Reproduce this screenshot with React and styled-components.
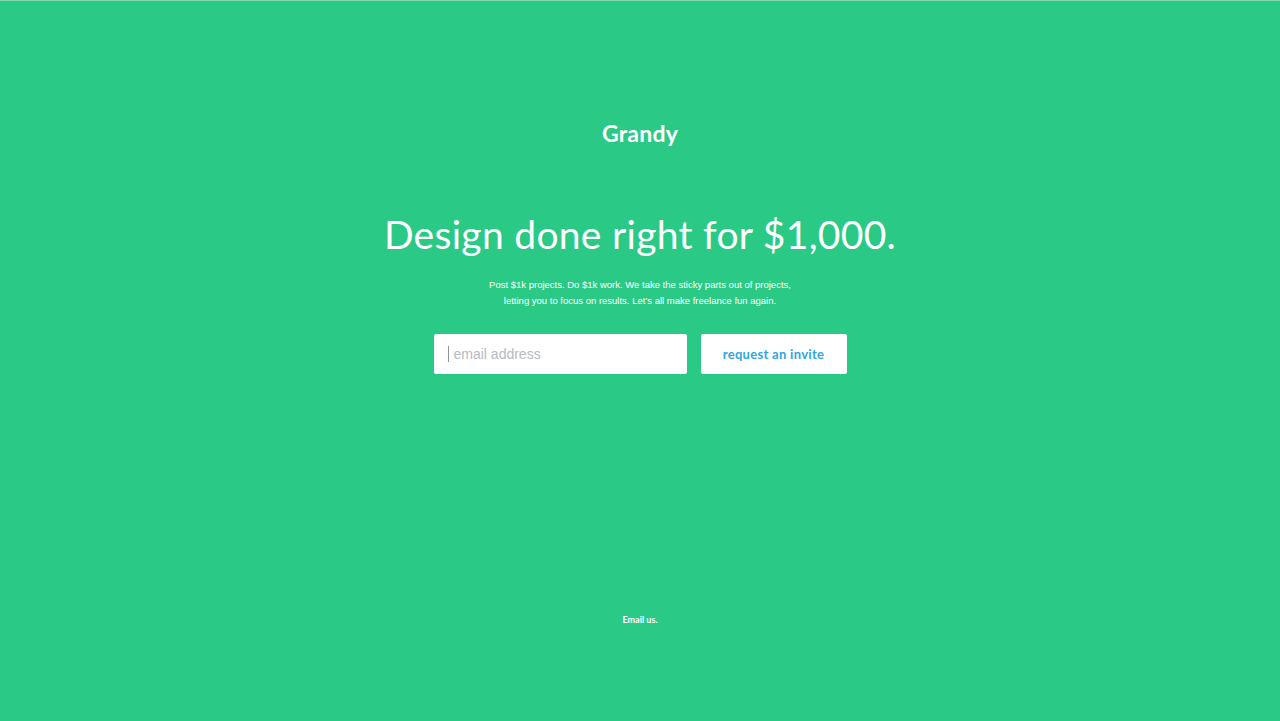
import React from 'react'
import styled, { createGlobalStyle } from 'styled-components'

const GlobalStyle = createGlobalStyle`
  html, body {
    margin: 0;
    padding: 0;
    background: #2bc986;
  }
`;

const Page = styled.div`
  height: 721px;
  background: #2bc986;
  border-top: 1px solid #7fdcb1;
  box-sizing: border-box;
  display: flex;
  flex-direction: column;
  align-items: center;
  color: #fff;
  font-family: "Lato", "Liberation Sans", sans-serif;
`;

const Logo = styled.div`
  margin-top: 116px;
  font-size: 23px;
  font-weight: 700;
  line-height: 32px;
  letter-spacing: 0.2px;
`;

const Headline = styled.h1`
  margin: 57px 0 0;
  font-size: 39px;
  font-weight: 400;
  line-height: 56px;
  letter-spacing: 0.3px;
`;

const Blurb = styled.p`
  margin: 15px 0 0;
  font-family: "Liberation Sans", Arial, sans-serif;
  font-size: 9.5px;
  line-height: 16px;
  text-align: center;
`;

const Form = styled.form`
  display: flex;
  gap: 14px;
  margin-top: 25px;
`;

const InputBox = styled.div`
  position: relative;
  width: 253px;
  height: 40px;
`;

const Caret = styled.span`
  position: absolute;
  left: 14px;
  top: 12px;
  width: 1px;
  height: 16px;
  background: #8c939a;
  pointer-events: none;
`;

const EmailInput = styled.input`
  width: 100%;
  height: 100%;
  box-sizing: border-box;
  border: none;
  border-radius: 2px;
  padding: 0 20px;
  font-family: "Liberation Sans", Arial, sans-serif;
  font-size: 14px;
  color: #555;
  outline: none;
  &::placeholder {
    color: #b5bcc3;
  }
`;

const InviteButton = styled.button`
  width: 146px;
  height: 40px;
  border: none;
  border-radius: 2px;
  background: #fff;
  color: #2fa7e0;
  font-family: "Lato", "Liberation Sans", sans-serif;
  font-size: 13px;
  font-weight: 700;
  letter-spacing: 0.3px;
  cursor: pointer;
`;

const Footer = styled.a`
  margin-top: auto;
  margin-bottom: 96px;
  font-size: 9px;
  font-weight: 700;
  color: #fff;
  text-decoration: none;
`;

export default function App() {
  return (
    <>
      <GlobalStyle />
      <Page>
        <Logo>Grandy</Logo>
        <Headline>Design done right for $1,000.</Headline>
        <Blurb>
          Post $1k projects. Do $1k work. We take the sticky parts out of projects,
          <br />
          letting you to focus on results. Let’s all make freelance fun again.
        </Blurb>
        <Form onSubmit={e => e.preventDefault()}>
          <InputBox>
            <EmailInput type="email" placeholder="email address" />
            <Caret />
          </InputBox>
          <InviteButton type="submit">request an invite</InviteButton>
        </Form>
        <Footer href="#">Email us.</Footer>
      </Page>
    </>
  )
}
